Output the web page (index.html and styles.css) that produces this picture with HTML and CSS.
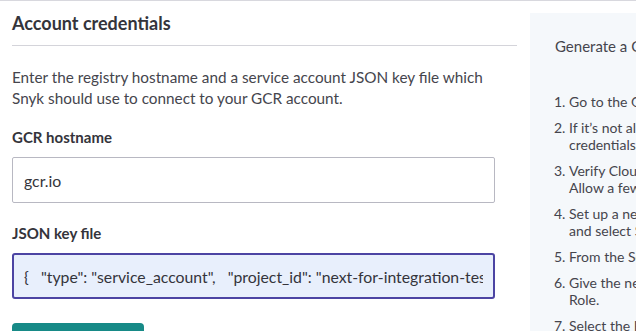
FILE: index.html
```html
<!DOCTYPE html>
<html lang="en">
<head>
  <meta charset="UTF-8">
  <title>GCR integration</title>
  <link rel="stylesheet" href="styles.css">
</head>
<body>
  <div class="layout">
    <!-- Credentials form -->
    <div class="main">
      <h2 class="section-title">Account credentials</h2>
      <p class="intro">Enter the registry hostname and a service account JSON key file which Snyk should use to connect to your GCR account.</p>
      <div class="field">
        <label class="field-label" for="hostname">GCR hostname</label>
        <input class="text-input" id="hostname" type="text" value="gcr.io">
      </div>
      <div class="field">
        <label class="field-label" for="keyfile">JSON key file</label>
        <input class="text-input active" id="keyfile" type="text" value='{   "type": "service_account",   "project_id": "next-for-integration-tests",   "private_key_id": "3f1c"'>
      </div>
      <button type="button" class="save-btn">Save</button>
    </div>
    <!-- Help panel -->
    <aside class="help">
      <div class="help-title">Generate a GCR JSON key file</div>
      <ol class="steps">
        <li>Go to the Google Cloud Platform console.</li>
        <li>If it’s not already enabled, enable the API for the<br>credentials.</li>
        <li>Verify Cloud Resource Manager API is enabled.<br>Allow a few minutes for it to propagate.</li>
        <li>Set up a new service account under IAM &amp; admin<br>and select Service accounts.</li>
        <li>From the Service accounts page, create a new one.</li>
        <li>Give the new account the Storage Object Viewer<br>Role.</li>
        <li>Select the Key type JSON and create the key.</li>
      </ol>
    </aside>
  </div>
</body>
</html>
```

FILE: styles.css
```css
/* Basic resets */
* { margin: 0; padding: 0; box-sizing: border-box; }
html, body { height: 100%; }
body {
  font-family: Lato, "Open Sans", sans-serif;
  color: #45454d;
  background: #fff;
  border-top: 1px solid #d8d8de;
  overflow: hidden;
}
.layout {
  display: flex;
  gap: 13px;
  padding-left: 12px;
}
/* Left column */
.main {
  flex: none;
  width: 505px;
}
.section-title {
  font-size: 18px;
  line-height: 24px;
  font-weight: 700;
  color: #34343b;
  padding: 10px 0;
  border-bottom: 1px solid #d4d4da;
}
.intro {
  margin-top: 21px;
  width: 495px;
  font-size: 15.3px;
  line-height: 21px;
}
.field {
  width: 483px;
  margin-top: 18px;
}
.field + .field { margin-top: 20px; }
.field-label {
  display: block;
  font-size: 15px;
  line-height: 20px;
  font-weight: 700;
  color: #34343b;
  margin-bottom: 10px;
}
.text-input {
  display: block;
  width: 100%;
  height: 46px;
  padding: 0 11px;
  font-family: inherit;
  font-size: 15.8px;
  color: #34343b;
  background: #fff;
  border: 1px solid #b8b8c2;
  border-radius: 2px;
  outline: none;
}
.text-input.active {
  background: #e8effc;
  border: 2px solid #4c44a3;
  border-radius: 3px;
  padding: 0 10px;
}
.save-btn {
  margin-top: 24px;
  width: 132px;
  height: 40px;
  border: none;
  border-radius: 4px;
  background: #178a87;
  color: #fff;
  font-family: inherit;
  font-size: 15px;
  font-weight: 700;
}
/* Right help panel */
.help {
  flex: none;
  width: 400px;
  margin-top: 12px;
  min-height: 400px;
  background: #f5f8fb;
  padding: 23px 25px;
  font-size: 14px;
  color: #45454d;
}
.help-title {
  font-size: 15px;
  line-height: 20px;
  margin-bottom: 37px;
}
.steps {
  padding-left: 14px;
  line-height: 17px;
  white-space: nowrap;
}
.steps li { margin-bottom: 9px; }
```
